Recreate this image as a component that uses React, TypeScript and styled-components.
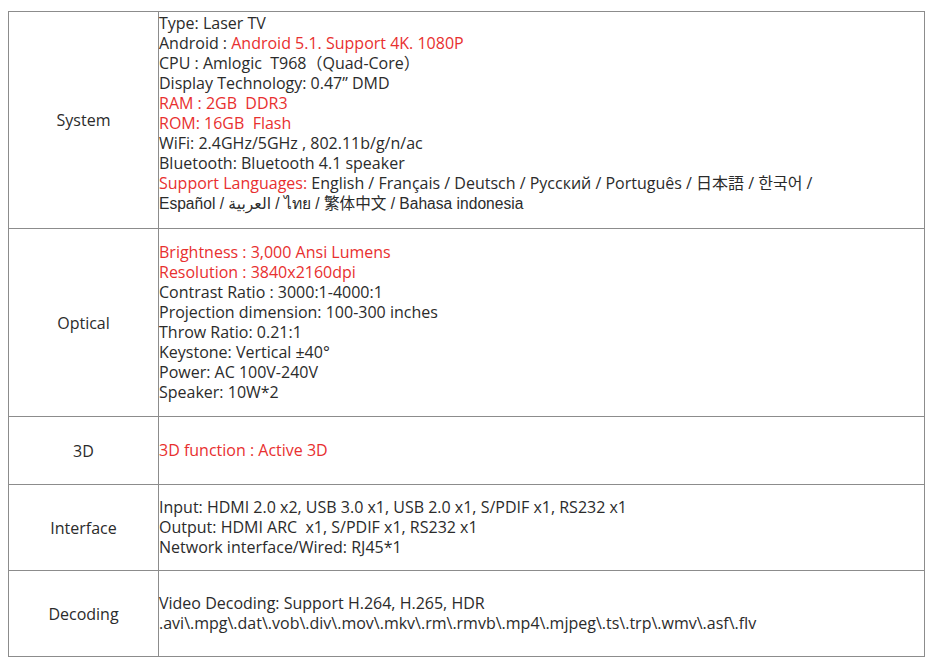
import React from "react";
import styled, { createGlobalStyle } from "styled-components";

const GlobalStyle = createGlobalStyle`
  body {
    margin: 0;
    background: #fff;
    font-family: "Open Sans", "Noto Sans CJK JP", "Noto Sans CJK KR", sans-serif;
  }
`;

const SPage = styled.div`
  padding: 11px 17px 0 8px;
`;

const SSpecTable = styled.table`
  width: 917px;
  border-collapse: collapse;
  border: 1px solid #333;
  font-size: 16px;
  line-height: 20px;
  color: #2b2b2b;

  td {
    border: 1px solid #8c8c8c;
    padding: 0;
    vertical-align: middle;
    white-space: nowrap;
  }
`;

const SLabel = styled.td`
  width: 149px;
  text-align: center;
`;

const SValue = styled.td<{ $h: number; $pb?: number }>`
  height: ${(p) => p.$h}px;
  padding-bottom: ${(p) => p.$pb ?? 2}px !important;
  box-sizing: border-box;
`;

const SLine = styled.div``;

const SRed = styled.span`
  color: #e8302f;
`;

const SAlt = styled.span`
  font-family: "Liberation Sans", "Noto Sans CJK TC", "DejaVu Sans", sans-serif;
  font-size: 15.6px;
`;

const App = () => {
  return (
    <SPage>
      <GlobalStyle />
      <SSpecTable>
        <tbody>
          <tr>
            <SLabel>System</SLabel>
            <SValue $h={217} $pb={14}>
              <SLine>Type: Laser TV</SLine>
              <SLine>
                Android : <SRed>Android 5.1. Support 4K. 1080P</SRed>
              </SLine>
              <SLine>CPU : Amlogic&nbsp; T968（Quad-Core）</SLine>
              <SLine>Display Technology: 0.47” DMD</SLine>
              <SLine>
                <SRed>RAM : 2GB&nbsp; DDR3</SRed>
              </SLine>
              <SLine>
                <SRed>ROM: 16GB&nbsp; Flash</SRed>
              </SLine>
              <SLine>WiFi: 2.4GHz/5GHz , 802.11b/g/n/ac</SLine>
              <SLine>Bluetooth: Bluetooth 4.1 speaker</SLine>
              <SLine>
                <SRed>Support Languages:</SRed> English / Français / Deutsch /
                Русский / Português / 日本語 / 한국어 /
              </SLine>
              <SLine>
                <SAlt>
                  Español / العربية / ไทย / 繁体中文 / Bahasa indonesia
                </SAlt>
              </SLine>
            </SValue>
          </tr>
          <tr>
            <SLabel>Optical</SLabel>
            <SValue $h={188}>
              <SLine>
                <SRed>Brightness : 3,000 Ansi Lumens</SRed>
              </SLine>
              <SLine>
                <SRed>Resolution : 3840x2160dpi</SRed>
              </SLine>
              <SLine>Contrast Ratio : 3000:1-4000:1</SLine>
              <SLine>Projection dimension: 100-300 inches</SLine>
              <SLine>Throw Ratio: 0.21:1</SLine>
              <SLine>Keystone: Vertical ±40°</SLine>
              <SLine>Power: AC 100V-240V</SLine>
              <SLine>Speaker: 10W*2</SLine>
            </SValue>
          </tr>
          <tr>
            <SLabel>3D</SLabel>
            <SValue $h={68}>
              <SRed>3D function : Active 3D</SRed>
            </SValue>
          </tr>
          <tr>
            <SLabel>Interface</SLabel>
            <SValue $h={86}>
              <SLine>Input: HDMI 2.0 x2, USB 3.0 x1, USB 2.0 x1, S/PDIF x1, RS232 x1</SLine>
              <SLine>Output: HDMI ARC&nbsp; x1, S/PDIF x1, RS232 x1</SLine>
              <SLine>Network interface/Wired: RJ45*1</SLine>
            </SValue>
          </tr>
          <tr>
            <SLabel>Decoding</SLabel>
            <SValue $h={86}>
              <SLine>Video Decoding: Support H.264, H.265, HDR</SLine>
              <SLine>
                .avi\.mpg\.dat\.vob\.div\.mov\.mkv\.rm\.rmvb\.mp4\.mjpeg\.ts\.trp\.wmv\.asf\.flv
              </SLine>
            </SValue>
          </tr>
        </tbody>
      </SSpecTable>
    </SPage>
  );
};

export default App;
